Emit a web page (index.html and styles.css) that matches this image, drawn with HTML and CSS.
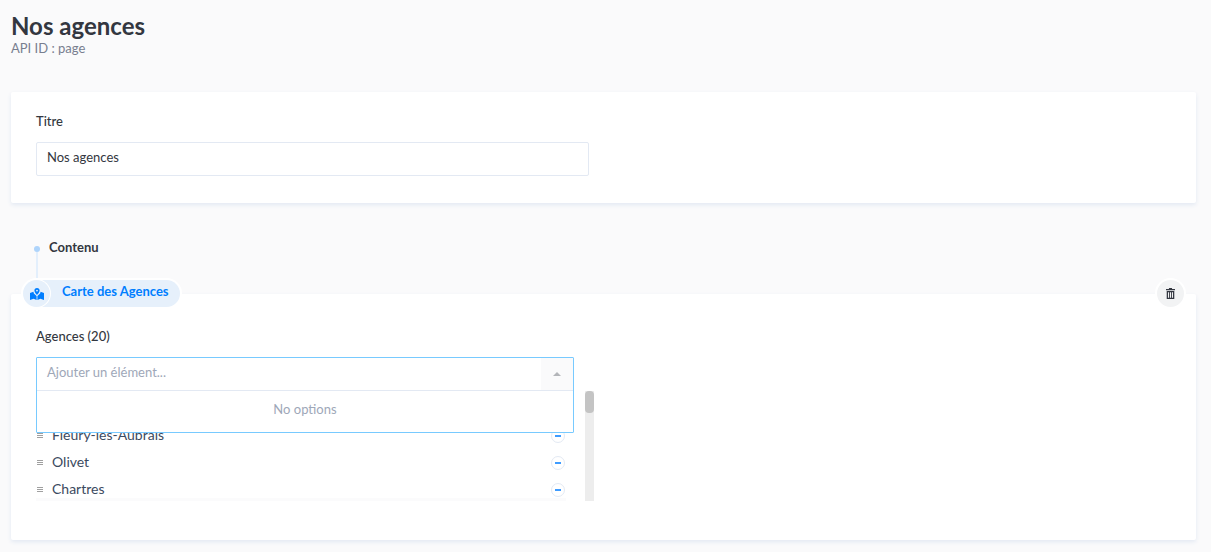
FILE: index.html
```html
<!DOCTYPE html>
<html>

<head>
    <title>Nos agences</title>
    <link rel="stylesheet" href="styles.css">
</head>

<body>
    <div class="page-head">
        <h1>Nos agences</h1>
        <p class="api-id">API ID : page</p>
    </div>

    <div class="card title-card">
        <label class="field-label">Titre</label>
        <div class="text-input">Nos agences</div>
    </div>

    <div class="zone-head">
        <span class="zone-dot"></span>
        <span class="zone-name">Contenu</span>
    </div>
    <div class="zone-line"></div>

    <div class="card component-card">
        <div class="component-tag">
            <span class="tag-icon">
                <svg width="14" height="12" viewBox="0 0 14 12">
                    <path fill="#007eff" d="M7 0a2.6 2.6 0 0 0-2.6 2.6C4.4 4.4 7 7 7 7s2.6-2.6 2.6-4.4A2.6 2.6 0 0 0 7 0zm0 1.7a.9.9 0 1 1 0 1.8.9.9 0 0 1 0-1.8z" />
                    <path fill="#007eff" d="M0 5l3.4-1.2.5 1.6L6.6 8v4L3.6 10.800 0 12zM7.400 8l2.700-2.600.5-1.600L14 5v7l-3.600-1.200-3 1.200z" />
                </svg>
            </span>
            <span class="tag-name">Carte des Agences</span>
        </div>
        <button class="delete-btn" type="button">
            <svg width="9" height="11" viewBox="0 0 10 12">
                <path fill="#333740" d="M3.500 0h3l.4 1H10v1.300H0V1h3.100zM.8 3.200h8.400V12H.8zm1.400 1.300v6.200h1.200V4.500zm2.200 0v6.200h1.200V4.500zm2.200 0v6.200h1.200V4.500z" />
            </svg>
        </button>

        <label class="field-label">Agences (20)</label>

        <div class="relation">
            <div class="select-box">
                <div class="select-control">
                    <span class="select-placeholder">Ajouter un élément...</span>
                    <span class="select-arrow"></span>
                </div>
                <div class="select-menu">No options</div>
            </div>

            <div class="list-wrap">
                <ul class="relation-list">
                    <li><span class="grip"></span><span class="rel-name">Fleury-les-Aubrais</span><span class="remove"></span></li>
                    <li><span class="grip"></span><span class="rel-name">Olivet</span><span class="remove"></span></li>
                    <li><span class="grip"></span><span class="rel-name">Chartres</span><span class="remove"></span></li>
                </ul>
                <div class="list-shadow"></div>
                <div class="scrollbar"><div class="scroll-thumb"></div></div>
            </div>
        </div>
    </div>
</body>

</html>
```

FILE: styles.css
```css
* {
    box-sizing: border-box;
}

body {
    margin: 0;
    padding: 0 15px 0 11px;
    height: 552px;
    overflow: hidden;
    background-color: #fafafb;
    font-family: Lato, sans-serif;
    font-size: 13px;
    color: #333740;
}

.page-head {
    height: 92px;
    padding-top: 11px;
}

h1 {
    margin: 0;
    font-size: 24px;
    line-height: 30px;
    font-weight: 700;
    color: #333740;
}

.api-id {
    margin: 0;
    font-size: 13px;
    line-height: 15px;
    color: #787e8f;
}

.card {
    background-color: #fff;
    border-radius: 2px;
    box-shadow: 0 2px 4px #e3e9f3;
    padding: 0 25px;
}

.title-card {
    height: 111px;
    padding-top: 21px;
}

.field-label {
    display: block;
    font-size: 13px;
    line-height: 16px;
    font-weight: 500;
    color: #333740;
}

.text-input {
    width: 553px;
    height: 34px;
    margin-top: 13px;
    padding: 0 10px;
    line-height: 29px;
    border: 1px solid #e3e9f3;
    border-radius: 2px;
    color: #333740;
}

.zone-head {
    display: flex;
    align-items: center;
    height: 20px;
    margin-top: 34px;
    padding-left: 23px;
}

.zone-dot {
    width: 6px;
    height: 6px;
    border-radius: 50%;
    background-color: #aed4fb;
    margin-top: 4px;
}

.zone-name {
    margin-left: 9px;
    font-weight: 700;
    color: #333740;
}

.zone-line {
    width: 2px;
    height: 42px;
    margin-top: -5px;
    margin-left: 25px;
    background-color: #e3effc;
}

.component-card {
    position: relative;
    height: 246px;
    padding-top: 34px;
}

.component-tag {
    position: absolute;
    top: -14px;
    left: 12px;
    display: flex;
    align-items: center;
    height: 27px;
    padding-right: 11px;
    border-radius: 14px;
    background-color: #e6f0fb;
    box-shadow: 0 0 0 2px #fff;
}

.tag-icon {
    display: flex;
    align-items: center;
    justify-content: center;
    width: 27px;
    height: 27px;
    border-radius: 50%;
    box-shadow: 0 0 0 1px #fff;
    background-color: #e6f0fb;
}

.tag-name {
    margin-left: 12px;
    padding-bottom: 6px;
    font-size: 13px;
    font-weight: 700;
    color: #007eff;
}

.delete-btn {
    position: absolute;
    top: -14px;
    right: 12px;
    display: flex;
    align-items: center;
    justify-content: center;
    width: 27px;
    height: 27px;
    padding: 0;
    border: 0;
    border-radius: 50%;
    background-color: #f2f3f4;
    box-shadow: 0 0 0 2px #fff;
}

.relation {
    position: relative;
    display: flow-root;
    margin-top: 13px;
}

.select-box {
    position: absolute;
    top: 0;
    left: 0;
    z-index: 2;
    width: 538px;
    border: 1px solid #78caff;
    border-radius: 1px;
    background-color: #fff;
}

.select-control {
    display: flex;
    justify-content: space-between;
    height: 33px;
    border-bottom: 1px solid #e3e9f3;
}

.select-placeholder {
    padding-left: 10px;
    line-height: 28px;
    color: #9ea7b8;
}

.select-arrow {
    position: relative;
    width: 32px;
    background-color: #fafafb;
}

.select-arrow::after {
    content: "";
    position: absolute;
    top: 14px;
    left: 12px;
    border-left: 4px solid transparent;
    border-right: 4px solid transparent;
    border-bottom: 4px solid #b3b5b9;
}

.select-menu {
    height: 41px;
    line-height: 37px;
    text-align: center;
    color: #9ea7b8;
}

.list-wrap {
    position: relative;
    display: flex;
    justify-content: space-between;
    width: 558px;
    height: 110px;
    margin-top: 34px;
    overflow: hidden;
}

.relation-list {
    list-style: none;
    width: 530px;
    margin: 0;
    padding: 30px 0 0;
}

.relation-list li {
    display: flex;
    align-items: center;
    height: 27px;
}

.grip {
    position: relative;
    width: 6px;
    height: 5px;
    margin-top: 1px;
    margin-left: 1px;
    border-top: 1px solid #a0a0a0;
    border-bottom: 1px solid #a0a0a0;
}

.grip::after {
    content: "";
    position: absolute;
    top: 1px;
    left: 0;
    width: 100%;
    height: 1px;
    background-color: #a0a0a0;
}

.rel-name {
    flex: 1;
    margin-left: 9px;
    font-size: 14px;
    color: #3b4a60;
}

.remove {
    position: relative;
    width: 14px;
    height: 14px;
    margin-top: 2px;
    margin-right: 1px;
    border: 1px solid #e3e9f3;
    border-radius: 50%;
}

.remove::after {
    content: "";
    position: absolute;
    top: 5px;
    left: 3px;
    width: 6px;
    height: 2px;
    background-color: #3f9cff;
}

.list-shadow {
    position: absolute;
    bottom: 0;
    left: 0;
    width: 530px;
    height: 3px;
    background-color: rgba(250, 250, 251, 0.7);
}

.scrollbar {
    flex: none;
    width: 9px;
    height: 110px;
    background-color: #ededed;
}

.scroll-thumb {
    height: 22px;
    border-radius: 4px;
    background-color: #c4c4c4;
}
```
